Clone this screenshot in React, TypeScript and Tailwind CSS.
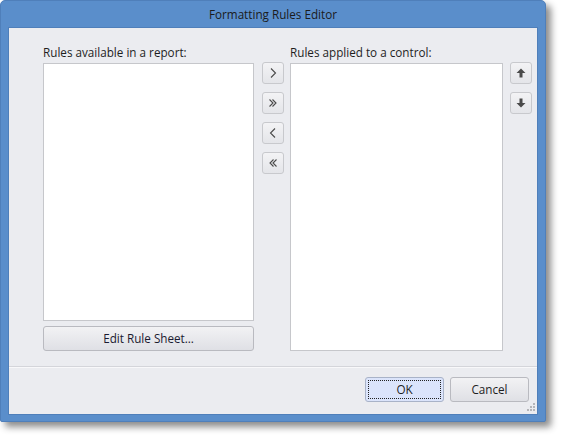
import React from "react";

const Chevron = ({ dir, double }: { dir: "left" | "right"; double?: boolean }) => {
  const flip = dir === "left" ? "scale(-1,1) translate(-12,0)" : undefined;
  return (
    <svg width="12" height="12" viewBox="0 0 12 12" className="block">
      <g transform={flip} fill="none" stroke="#4a4a4a" strokeWidth="1.1">
        {double ? (
          <>
            <path d="M2.5 2.5 L6 6 L2.5 9.5" />
            <path d="M5.5 2.5 L9 6 L5.5 9.5" />
          </>
        ) : (
          <path d="M4 1.5 L8.5 6 L4 10.5" />
        )}
      </g>
    </svg>
  );
};

const Arrow = ({ dir }: { dir: "up" | "down" }) => (
  <svg width="10" height="10" viewBox="0 0 10 10" className="block">
    <g transform={dir === "down" ? "rotate(180 5 5)" : undefined} fill="#4a4a4a">
      <path d="M5 0.5 L9.5 5 L6.5 5 L6.5 9.5 L3.5 9.5 L3.5 5 L0.5 5 Z" />
    </g>
  </svg>
);

const SmallButton = ({ children }: { children: React.ReactNode }) => (
  <button className="w-[22px] h-[22px] flex items-center justify-center rounded-[3px] border border-[#c8c9cd] bg-gradient-to-b from-[#f3f3f5] to-[#e4e5e9]">
    {children}
  </button>
);

const Grip = () => (
  <div className="absolute right-[2px] bottom-[3px] grid grid-cols-3 gap-[1px]">
    {[0, 0, 1, 0, 1, 1, 1, 1, 1].map((on, i) => (
      <div key={i} className={on ? "w-[2px] h-[2px] bg-[#b4b5b9]" : "w-[2px] h-[2px]"} />
    ))}
  </div>
);

export default function App() {
  return (
    <div
      className="w-[562px] h-[437px] bg-white text-[11.7px] text-[#1e1e1e]"
      style={{ fontFamily: '"Open Sans", "Noto Sans", sans-serif' }}
    >
      <div className="w-[546px] h-[422px] flex flex-col bg-[#5a8ecb] border border-[#4f7fba] rounded-t-[5px] rounded-b-[2px] shadow-[5px_5px_7px_rgba(0,0,0,0.45)]">
        <div className="h-[26px] flex items-center justify-center text-[11.7px] text-[#1b1b1b] pt-[1px]">
          Formatting Rules Editor
        </div>
        <div className="relative mx-[7px] mb-[6px] flex-1 bg-[#ebecf0] flex flex-col border border-[#4f7fba]">
          <div className="flex pl-[34px] pt-[16px]">
            <div className="w-[211px] flex flex-col">
              <div className="h-[16px] leading-[16px] mb-[3px]">Rules available in a report:</div>
              <div className="h-[258px] bg-white border border-[#c6c7cb]" />
              <button className="mt-[5px] h-[25px] rounded-[3px] border border-[#b9bac0] bg-gradient-to-b from-[#f2f2f4] to-[#dfe0e5] text-[11.7px] text-[#1a1a30]">
                Edit Rule Sheet…
              </button>
            </div>
            <div className="ml-[8px] mt-[18px] flex flex-col gap-[8px]">
              <SmallButton><Chevron dir="right" /></SmallButton>
              <SmallButton><Chevron dir="right" double /></SmallButton>
              <SmallButton><Chevron dir="left" /></SmallButton>
              <SmallButton><Chevron dir="left" double /></SmallButton>
            </div>
            <div className="ml-[6px] w-[213px] flex flex-col">
              <div className="h-[16px] leading-[16px] mb-[3px]">Rules applied to a control:</div>
              <div className="h-[288px] bg-white border border-[#c6c7cb]" />
            </div>
            <div className="ml-[7px] mt-[18px] flex flex-col gap-[8px]">
              <SmallButton><Arrow dir="up" /></SmallButton>
              <SmallButton><Arrow dir="down" /></SmallButton>
            </div>
          </div>
          <div className="mt-[15px] h-[1px] bg-[#d4d5da]" />
          <div className="h-[1px] bg-[#f8f8fa]" />
          <div className="flex justify-end gap-[6px] pr-[8px] mt-[9px]">
            <button className="w-[79px] h-[25px] rounded-[3px] border border-[#a9b3c8] bg-[#dbe4fb] p-[2px]">
              <div className="w-full h-full border border-dotted border-[#222] flex items-center justify-center">OK</div>
            </button>
            <button className="w-[79px] h-[25px] rounded-[3px] border border-[#b9bac0] bg-gradient-to-b from-[#f2f2f4] to-[#dfe0e5]">
              Cancel
            </button>
          </div>
          <Grip />
        </div>
      </div>
    </div>
  );
}
